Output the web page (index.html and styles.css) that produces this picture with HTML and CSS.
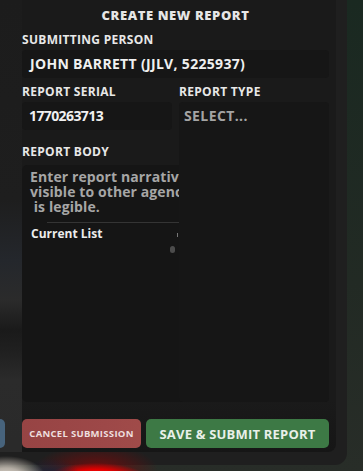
FILE: index.html
```html
<!DOCTYPE html>
<html lang="en">
<head>
<meta charset="utf-8">
<title>Create New Report</title>
<link rel="stylesheet" href="styles.css">
</head>
<body>
<div class="modal">
  <div class="sheet">
    <h1 class="title">CREATE NEW REPORT</h1>
    <div class="field">
      <label class="label">SUBMITTING PERSON</label>
      <div class="input">JOHN BARRETT (JJLV, 5225937)</div>
    </div>
    <div class="row">
      <div class="field">
        <label class="label">REPORT SERIAL</label>
        <div class="input input-serial">1770263713</div>
      </div>
      <div class="field">
        <label class="label">REPORT TYPE</label>
        <div class="select-wrap">
          <div class="select">SELECT...</div>
          <div class="select-menu"></div>
        </div>
      </div>
    </div>
    <div class="field field-body">
      <label class="label">REPORT BODY</label>
      <div class="editor">
        <p class="placeholder">Enter report narrative here. Keep it factual, it is<br>visible to other agencies, so make sure that it<br> is legible.</p>
        <hr class="divider">
        <div class="list-title">Current List</div>
        <span class="caret"></span>
        <span class="scroll-dot"></span>
      </div>
    </div>
    <div class="footer">
      <button class="btn btn-side" aria-label="side"></button>
      <button class="btn btn-cancel">CANCEL SUBMISSION</button>
      <button class="btn btn-save">SAVE &amp; SUBMIT REPORT</button>
    </div>
  </div>
</div>
</body>
</html>
```

FILE: styles.css
```css
* { box-sizing: border-box; }

html, body {
  margin: 0;
  padding: 0;
}

body {
  width: 363px;
  height: 471px;
  overflow: hidden;
  font-family: "Open Sans", "DejaVu Sans", sans-serif;
  background:
    radial-gradient(40px 22px at 6px 478px, #e6ded2 0%, #b4ada4 45%, rgba(60,60,60,0) 100%),
    radial-gradient(30px 18px at 50px 476px, #1a2038 0%, rgba(26,32,56,0) 100%),
    radial-gradient(48px 13px at 96px 476px, #ff1616 0%, #e40000 50%, rgba(200,0,0,0) 100%),
    radial-gradient(62px 26px at 96px 470px, #700c0c 0%, rgba(110,12,12,0) 100%),
    linear-gradient(180deg, #1a2921 0%, #222a24 60%, #282d28 100%);
}

.modal {
  width: 347px;
  height: 465px;
  padding: 0 11px 13px 0;
  border-bottom-right-radius: 12px;
  background:
    radial-gradient(40px 22px at 6px 478px, #e6ded2 0%, #b4ada4 45%, rgba(60,60,60,0) 100%),
    radial-gradient(30px 18px at 50px 476px, #1a2038 0%, rgba(26,32,56,0) 100%),
    radial-gradient(48px 13px at 96px 476px, #ff1616 0%, #e40000 50%, rgba(200,0,0,0) 100%),
    radial-gradient(62px 26px at 96px 470px, #700c0c 0%, rgba(110,12,12,0) 100%),
    #1f1f1f;
}

.sheet {
  height: 452px;
  padding: 7px 7px 10px 22px;
  border-bottom-right-radius: 8px;
  background:
    linear-gradient(180deg, #1c1c1c 0px, #1e1e1e 200px, #24272c 260px, #2b2b2b 300px, #1a1a1a 330px, #202020 352px, #2b2b2b 380px, #2a2a2a 440px) 0 0 / 22px 100% no-repeat,
    linear-gradient(180deg, #1a1a1a 0, #1a1a1a 400px, #161616 452px);
  display: flex;
  flex-direction: column;
}

.title {
  margin: 0 0 9px;
  font-size: 13px;
  line-height: 16px;
  font-weight: 800;
  letter-spacing: 0.6px;
  text-align: center;
  color: #e6e6e6;
}

.field {
  display: flex;
  flex-direction: column;
  margin-bottom: 6px;
}

.label {
  display: block;
  margin-bottom: 2px;
  font-size: 12px;
  line-height: 16px;
  font-weight: 700;
  letter-spacing: 0.3px;
  color: #e8e8e8;
}

.input {
  height: 28px;
  padding: 0 8px;
  border-radius: 4px;
  background: #161616;
  font-size: 14px;
  line-height: 28px;
  font-weight: 700;
  letter-spacing: 0.32px;
  color: #f0f0f0;
  white-space: nowrap;
}

.input-serial {
  padding-left: 7px;
  letter-spacing: -0.6px;
}

.row {
  display: grid;
  grid-template-columns: 150px 150px;
  column-gap: 7px;
  margin-bottom: 8px;
}

.select-wrap {
  position: relative;
}

.select {
  height: 28px;
  padding: 0 5px;
  border-radius: 4px 4px 0 0;
  background: #161616;
  font-size: 14px;
  line-height: 28px;
  font-weight: 700;
  letter-spacing: 0.4px;
  color: #a4a4a4;
}

.select-menu {
  position: absolute;
  top: 100%;
  left: 0;
  right: 0;
  height: 272px;
  z-index: 2;
  background: #161616;
  border-radius: 0 0 4px 4px;
}

.field-body .label {
  margin-bottom: 5px;
}

.editor {
  position: relative;
  height: 237px;
  border-radius: 5px;
  background: #151515;
  overflow: hidden;
}

.placeholder {
  margin: 0;
  padding: 4px 8px 0;
  font-size: 14px;
  line-height: 15px;
  font-weight: 700;
  letter-spacing: 0.1px;
  color: #a6a6a6;
  white-space: pre-wrap;
  width: 600px;
}

.divider {
  margin: 8px 0 0 25px;
  border: 0;
  border-top: 1px solid #343434;
  height: 0;
}

.list-title {
  margin: 3px 0 0 9px;
  font-size: 12px;
  line-height: 15px;
  font-weight: 700;
  color: #ececec;
}

.caret {
  position: absolute;
  left: 155px;
  top: 68px;
  width: 1px;
  height: 4px;
  background: #777;
}

.scroll-dot {
  position: absolute;
  left: 148px;
  top: 81px;
  width: 5px;
  height: 7px;
  border-radius: 3px;
  background: #4c4c4c;
}

.footer {
  display: flex;
  margin: 11px 0 0 -22px;
}

.btn {
  height: 29px;
  border: 0;
  border-radius: 5px;
  padding: 0;
  font-family: "Open Sans", "DejaVu Sans", sans-serif;
  font-weight: 700;
  cursor: pointer;
}

.btn-side {
  width: 5px;
  margin-right: 17px;
  border-radius: 0 5px 5px 0;
  background: #47637c;
}

.btn-cancel {
  width: 119px;
  margin-right: 5px;
  background: linear-gradient(90deg, #974444, #9d4848 70%, #a04b49);
  font-size: 9.5px;
  letter-spacing: 0.3px;
  color: #eedede;
}

.btn-save {
  width: 183px;
  background: #3d7945;
  font-size: 13px;
  letter-spacing: 0.2px;
  color: #e9f0e9;
}
```
